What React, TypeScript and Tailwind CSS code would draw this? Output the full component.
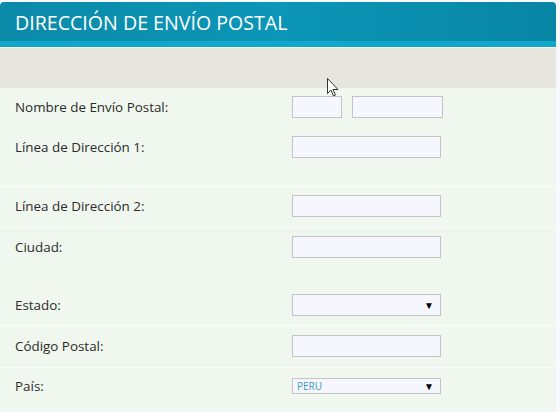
import React from 'react';

const font = { fontFamily: '"Open Sans", "Liberation Sans", sans-serif' };

function Field({ w = 'w-[149px]' }: { w?: string }) {
  return <div className={`${w} h-[22px] bg-[#f6f6fe] border border-[#c4c4c4]`} />;
}

function Select({ h = 'h-[22px]', value }: { h?: string; value?: string }) {
  return (
    <div className={`w-[149px] ${h} bg-[#f6f6fe] border border-[#c4c4c4] flex items-center justify-between pl-[4px] pr-[6px]`}>
      <span className="text-[10px] text-[#3a9cc0] leading-none">{value}</span>
      <span className="text-[10px] text-black leading-none">▼</span>
    </div>
  );
}

function Row({ label, children, className = '' }: { label: string; children: React.ReactNode; className?: string }) {
  return (
    <div className={`flex items-center ${className}`}>
      <div className="w-[292px] pl-[15px] text-[13.4px] text-[#2b2b2b]">{label}</div>
      {children}
    </div>
  );
}

export default function App() {
  return (
    <div className="min-h-[412px] bg-[#f8f8ff] pt-[2px] relative" style={font}>
      <div className="w-[556px]">
        <div className="h-[39px] rounded-t-[4px] bg-gradient-to-r from-[#0b8aa8] via-[#0c96b8] to-[#0885a4] flex items-center pl-[15px]">
          <h1 className="text-[19.6px] text-white font-normal leading-none mt-[2px]">DIRECCIÓN DE ENVÍO POSTAL</h1>
        </div>
        <div className="h-[6px] bg-[#10a8c8]" />
        <div className="h-[1px] bg-white" />
        <div className="h-[40px] bg-[#e6e6de]" />

        <div className="bg-[#f0f7ee]">
          <div className="pt-[8px] pb-[28px] border-b border-[#fbfdfa]">
            <Row label="Nombre de Envío Postal:">
              <div className="flex gap-[10px]">
                <Field w="w-[50px]" />
                <Field w="w-[91px]" />
              </div>
            </Row>
            <Row label="Línea de Dirección 1:" className="mt-[18px]">
              <Field />
            </Row>
          </div>
          <div className="pt-[8px] pb-[10px] border-b border-[#fbfdfa]">
            <Row label="Línea de Dirección 2:">
              <Field />
            </Row>
          </div>
          <div className="pt-[8px] pb-[9px] border-b border-[#fbfdfa]">
            <Row label="Ciudad:">
              <Field />
            </Row>
            <Row label="Estado:" className="mt-[36px]">
              <Select />
            </Row>
          </div>
          <div className="pt-[9px] pb-[10px] border-b border-[#fbfdfa]">
            <Row label="Código Postal:">
              <Field />
            </Row>
          </div>
          <div className="pt-[8px] pb-[15px]">
            <Row label="País:">
              <Select h="h-[16px]" value="PERU" />
            </Row>
          </div>
        </div>
      </div>

      <svg className="absolute left-[327px] top-[78px]" width="12" height="19" viewBox="0 0 12 19">
        <path d="M0.5 0.5 L0.5 15.5 L4 12 L6.5 18 L8.5 17 L6 11.5 L11 11.5 Z" fill="white" stroke="#333" strokeWidth="1" />
      </svg>
    </div>
  );
}
